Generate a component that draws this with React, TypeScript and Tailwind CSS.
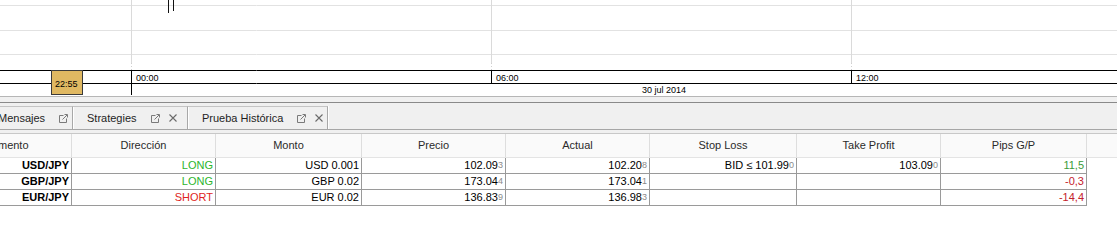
import React from 'react';

const font = { fontFamily: '"Liberation Sans", Arial, sans-serif' };

const cols = [144, 144, 146, 144, 144, 147, 144, 146];
const heads = ['Instrumento', 'Dirección', 'Monto', 'Precio', 'Actual', 'Stop Loss', 'Take Profit', 'Pips G/P'];

type Cell = { t: string; small?: string; cls?: string };

const rows: Cell[][] = [
  [
    { t: 'USD/JPY', cls: 'font-bold' },
    { t: 'LONG', cls: 'text-[#2cb52c]' },
    { t: 'USD 0.001' },
    { t: '102.09', small: '3' },
    { t: '102.20', small: '8' },
    { t: 'BID ≤ 101.99', small: '0' },
    { t: '103.09', small: '0' },
    { t: '11,5', cls: 'text-[#3a9b3a]' },
  ],
  [
    { t: 'GBP/JPY', cls: 'font-bold' },
    { t: 'LONG', cls: 'text-[#2cb52c]' },
    { t: 'GBP 0.02' },
    { t: '173.04', small: '4' },
    { t: '173.04', small: '1' },
    { t: '' },
    { t: '' },
    { t: '-0,3', cls: 'text-[#c4222c]' },
  ],
  [
    { t: 'EUR/JPY', cls: 'font-bold' },
    { t: 'SHORT', cls: 'text-[#e01f22]' },
    { t: 'EUR 0.02' },
    { t: '136.83', small: '9' },
    { t: '136.98', small: '3' },
    { t: '' },
    { t: '' },
    { t: '-14,4', cls: 'text-[#c4222c]' },
  ],
];

function PopOut() {
  return (
    <svg width="9" height="9" viewBox="0 0 9 9" className="shrink-0">
      <path d="M4.5 1.5H0.5V8.5H7.5V4.5" fill="none" stroke="#7a7a7a" strokeWidth="1" />
      <path d="M3.5 5.5L8 1M5.5 0.5H8.5V3.5" fill="none" stroke="#7a7a7a" strokeWidth="1" />
    </svg>
  );
}

function Close() {
  return (
    <svg width="8" height="8" viewBox="0 0 8 8" className="shrink-0">
      <path d="M0.5 0.5L7.5 7.5M7.5 0.5L0.5 7.5" stroke="#6a6a6a" strokeWidth="1.1" />
    </svg>
  );
}

function Chart() {
  const vx = [131.5, 491.5, 851.5];
  return (
    <svg width="1117" height="96" className="block">
      <rect width="1117" height="96" fill="#ffffff" />
      {[5.5, 30.5, 54.5].map((y) => (
        <line key={y} x1="0" x2="1117" y1={y} y2={y} stroke="#e2e2e2" />
      ))}
      {vx.map((x) => (
        <g key={x}>
          <line x1={x} x2={x} y1="0" y2="63" stroke="#dadada" />
          <line x1={x} x2={x} y1="63" y2="70" stroke="#d0d0d0" strokeDasharray="1 2" />
        </g>
      ))}
      <line x1="168.5" x2="168.5" y1="0" y2="13" stroke="#111" />
      <line x1="173.5" x2="173.5" y1="0" y2="11" stroke="#111" />
      <line x1="0" x2="1117" y1="70.5" y2="70.5" stroke="#000" />
      <line x1="0" x2="1117" y1="83.5" y2="83.5" stroke="#000" />
      <line x1="131.5" x2="131.5" y1="70" y2="95" stroke="#000" />
      <line x1="491.5" x2="491.5" y1="70" y2="84" stroke="#000" />
      <line x1="851.5" x2="851.5" y1="70" y2="84" stroke="#000" />
      <rect x="51.5" y="70.5" width="31" height="24" fill="#dfb862" stroke="#3a3a3a" />
      <g style={font} fontSize="9" fill="#000">
        <text x="55" y="87">22:55</text>
        <text x="136" y="81">00:00</text>
        <text x="496" y="81">06:00</text>
        <text x="856" y="81">12:00</text>
        <text x="642" y="93">30 jul 2014</text>
      </g>
    </svg>
  );
}

function Tab({ label, w, pl, close, gap }: { label: string; w: number; pl: number; close: boolean; gap: number }) {
  return (
    <div
      className="flex h-[23px] shrink-0 items-center border-r border-r-[#a8a8a8] border-t border-t-[#c4c4c4] shadow-[1px_0_0_#ffffff] text-[11px] text-[#1e1e1e]"
      style={{ width: w, paddingLeft: pl }}
    >
      <span className="whitespace-nowrap">{label}</span>
      <span style={{ marginLeft: gap }} className="flex items-center gap-[9px]">
        <PopOut />
        {close && <Close />}
      </span>
    </div>
  );
}

export default function App() {
  return (
    <div className="h-[247px] w-[1117px] overflow-hidden bg-white" style={font}>
      <Chart />
      <div className="h-[7px] border-t border-b border-t-[#b6b6b6] border-b-[#8a8a8a] bg-[#f0f0f0]" />
      <div className="flex h-[27px] items-end border-b border-[#a6a6a6] bg-[#f0f0f0]">
        <div className="-ml-[40px] flex">
          <Tab label="Mensajes" w={113} pl={38} close={false} gap={14} />
          <Tab label="Strategies" w={115} pl={14} close={true} gap={14} />
          <Tab label="Prueba Histórica" w={140} pl={14} close={true} gap={14} />
        </div>
      </div>
      <div className="h-[3px] bg-[#f0f0f0]" />
      <div className="-ml-[72px] flex h-[25px] border-t border-b border-t-[#c8c8c8] border-b-[#e4e4e4] bg-[#fafafa] text-[11px] text-[#2a2a2a]">
        {heads.map((h, i) => (
          <div
            key={h}
            className="flex shrink-0 items-center justify-center border-r border-[#dedede]"
            style={{ width: cols[i] }}
          >
            {h}
          </div>
        ))}
        <div className="flex-1" />
      </div>
      <div className="-ml-[72px] flex flex-col text-[11px] text-black">
        {rows.map((r, ri) => (
          <div key={ri} className="flex h-[16px] w-fit border-b border-[#9a9a9a]">
            {r.map((c, ci) => (
              <div
                key={ci}
                className={`flex shrink-0 items-center justify-end border-r border-[#9a9a9a] pr-[2px] leading-none ${c.cls ?? ''}`}
                style={{ width: cols[ci] }}
              >
                {c.t}
                {c.small && <span className="text-[9px] text-[#8a8a8a]">{c.small}</span>}
              </div>
            ))}
          </div>
        ))}
      </div>
    </div>
  );
}
